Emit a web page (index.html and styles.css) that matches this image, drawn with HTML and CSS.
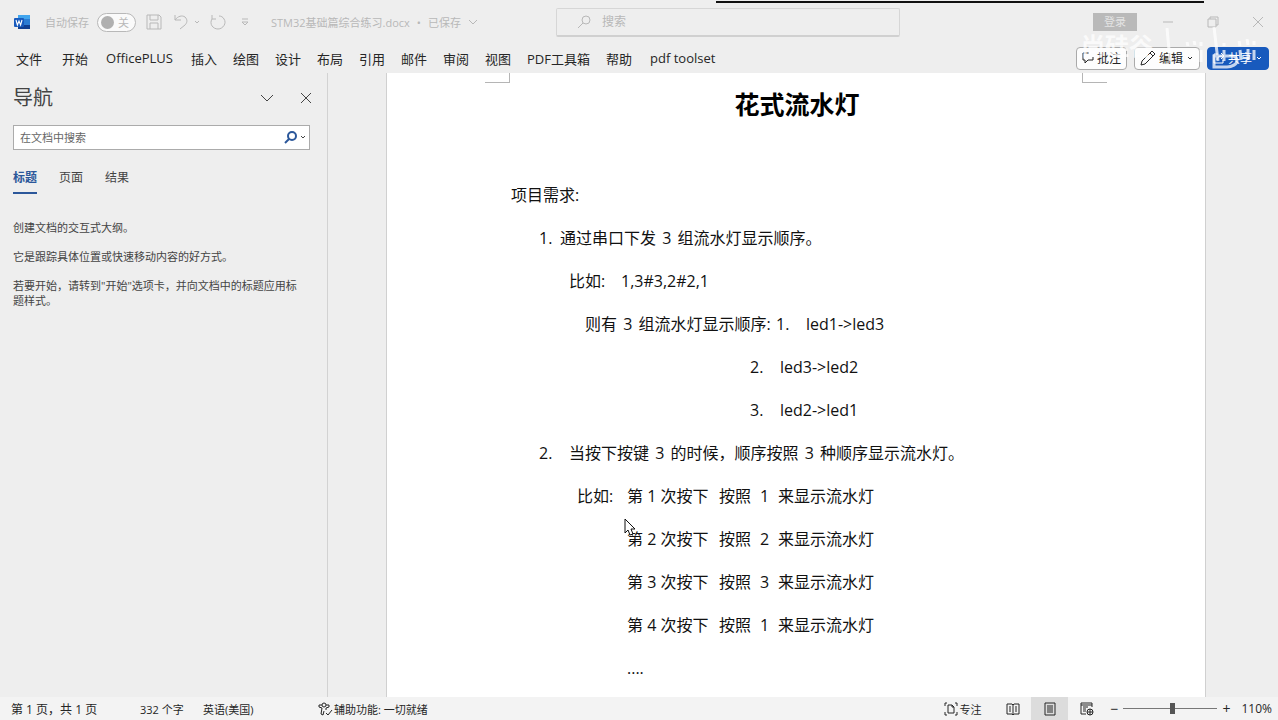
FILE: index.html
```html
<!DOCTYPE html>
<html lang="zh-CN">
<head>
    <meta charset="UTF-8">
    <meta name="viewport" content="width=device-width, initial-scale=1.0">
    <title>STM32基础篇综合练习.docx</title>
    <link rel="stylesheet" href="styles.css">
</head>
<body>
    <div class="top-line"></div>
    <header class="titlebar">
        <div class="quick">
            <svg class="logo" width="16" height="16" viewBox="0 0 16 16">
                <rect x="4" y="1" width="12" height="14" rx="1" fill="#2b7cd3"/>
                <rect x="4" y="1" width="12" height="4" fill="#41a5ee"/>
                <rect x="4" y="11" width="12" height="4" fill="#103f91"/>
                <rect x="0" y="4" width="10" height="9" rx="1" fill="#185abd"/>
                <path d="M2 6l1.400 5L5 7l1.600 4L8 6" fill="none" stroke="#fff" stroke-width="1.100"/>
            </svg>
            <label for="autosave">自动保存</label>
            <span class="switch"><input type="checkbox" id="autosave"><i></i><b>关</b></span>
            <button class="icon-btn" aria-label="保存">
                <svg width="16" height="16" viewBox="0 0 16 16"><path d="M1 1h12l2 2v12H1zM4 1v5h8V1M4 15V9h8v6"/></svg>
            </button>
            <button class="icon-btn undo" aria-label="撤消">
                <svg width="26" height="16" viewBox="0 0 26 16"><path d="M1 1v5h6M1 6C4 2 8 1 11 3c3 3 2 6 0 8l-5 4M21 7l2 2 2-2"/></svg>
            </button>
            <button class="icon-btn" aria-label="恢复">
                <svg width="16" height="16" viewBox="0 0 16 16"><path d="M2 1v4h4M2 5c-3 5 1 10 6 10s9-6 6-10c-1-2-3-3-5-3"/></svg>
            </button>
            <button class="icon-btn more" aria-label="自定义">
                <svg width="8" height="8" viewBox="0 0 8 8"><path d="M1 1h6M1 4l3 3 3-3z"/></svg>
            </button>
        </div>
        <div class="doc-name">
            <span>STM32基础篇综合练习.docx</span> <span>•</span> <span>已保存</span>
            <svg width="10" height="6" viewBox="0 0 10 6"><path d="M1 1l4 4 4-4"/></svg>
        </div>
        <div class="search">
            <svg width="14" height="14" viewBox="0 0 14 14"><circle cx="9" cy="5" r="4"/><path d="M6 8l-5 5"/></svg>
            <input type="text" placeholder="搜索" aria-label="搜索">
        </div>
        <div class="window">
            <button class="login">登录</button>
            <button class="icon-btn" aria-label="最小化"><svg width="12" height="12" viewBox="0 0 12 12"><path d="M1 6h10"/></svg></button>
            <button class="icon-btn" aria-label="还原"><svg width="12" height="12" viewBox="0 0 12 12"><path d="M1 3h8v8H1zM3 3V1h8v8H9"/></svg></button>
            <button class="icon-btn" aria-label="关闭"><svg width="12" height="12" viewBox="0 0 12 12"><path d="M1 1l10 10M11 1L1 11"/></svg></button>
        </div>
    </header>

    <nav class="ribbon">
        <a class="file" href="#">文件</a>
        <a class="home" href="#">开始</a>
        <a class="plus" href="#">OfficePLUS</a>
        <a href="#">插入</a>
        <a href="#">绘图</a>
        <a href="#">设计</a>
        <a href="#">布局</a>
        <a href="#">引用</a>
        <a href="#">邮件</a>
        <a href="#">审阅</a>
        <a href="#">视图</a>
        <a href="#">PDF工具箱</a>
        <a class="help" href="#">帮助</a>
        <a href="#">pdf toolset</a>
        <div class="actions">
            <button><svg width="12" height="12" viewBox="0 0 12 12"><path d="M7 1H1v7h2v3l3-3h5V5"/></svg>批注</button>
            <button><svg width="16" height="16" viewBox="0 0 16 16"><path d="M1 15l1-4L12 1l3 3L5 14zM10 3l3 3"/></svg>编辑<svg width="8" height="6" viewBox="0 0 8 6"><path d="M2 2l2 2 2-2"/></svg></button>
            <button class="share"><svg width="12" height="12" viewBox="0 0 12 12"><path d="M5 2H1v9h9V8M4 8c0-3 2-4 7-4M8 1l3 3-3 3"/></svg>共享<svg width="8" height="6" viewBox="0 0 8 6"><path d="M2 2l2 2 2-2"/></svg></button>
        </div>
    </nav>

    <!-- channel watermark over the window corner -->
    <div class="watermark">
        <span>尚硅谷</span>
        <svg width="98" height="46" viewBox="0 0 98 46">
            <path d="M7 5l3 33M27 19l1 4M26 27l1 12M34 18l1 4M34 27v12M41 19v4M41 27v12M54 4l4 34M64 20v3M64 27v11M79 18l1 5M80 27l1 10M87 16l1 6M88 26v11M94 18v4M94 27v10"/>
            <path d="M54 33h18c4 0 5 2 5 5s-5 6-10 6H54z"/>
        </svg>
    </div>

    <main>
        <aside class="outline">
            <div class="outline-head">
                <h2>导航</h2>
                <button class="icon-btn" aria-label="选项"><svg width="14" height="12" viewBox="0 0 14 12"><path d="M1 3l6 6 6-6"/></svg></button>
                <button class="icon-btn" aria-label="关闭"><svg width="12" height="12" viewBox="0 0 12 12"><path d="M1 1l10 10M11 1L1 11"/></svg></button>
            </div>
            <div class="find">
                <input type="text" placeholder="在文档中搜索" aria-label="在文档中搜索">
                <svg width="14" height="14" viewBox="0 0 14 14"><circle cx="8" cy="6" r="4"/><path d="M5 9l-4 4"/></svg>
                <svg class="thin" width="8" height="6" viewBox="0 0 8 6"><path d="M2 2l2 2 2-2"/></svg>
            </div>
            <div class="tabs">
                <button class="active">标题</button>
                <button>页面</button>
                <button>结果</button>
            </div>
            <p>创建文档的交互式大纲。</p>
            <p>它是跟踪具体位置或快速移动内容的好方式。</p>
            <p>若要开始，请转到"开始"选项卡，并向文档中的标题应用标题样式。</p>
        </aside>
        <div class="canvas">
            <article class="page">
                <i class="crop left"></i>
                <i class="crop right"></i>
                <h1>花式流水灯</h1>
                <p>项目需求:</p>
                <p class="in1"><span class="num">1.</span>通过串口下发 <b>3</b> 组流水灯显示顺序。</p>
                <p class="in2"><span class="eg">比如:</span>1,3#3,2#2,1</p>
                <p class="in3"><span class="lead">则有 <b>3</b> 组流水灯显示顺序:</span><span class="led">1.</span>led1-&gt;led3</p>
                <p class="in5"><span class="led">2.</span>led3-&gt;led2</p>
                <p class="in5"><span class="led">3.</span>led2-&gt;led1</p>
                <p class="in1"><span class="led">2.</span>当按下按键 <b>3</b> 的时候，顺序按照 <b>3</b> 种顺序显示流水灯。</p>
                <p class="press first"><span class="eg">比如:</span><span class="nth">第 1 次按下</span><span class="by">按照</span><span class="n">1</span>来显示流水灯</p>
                <p class="press"><span class="nth">第 2 次按下</span><span class="by">按照</span><span class="n">2</span>来显示流水灯</p>
                <p class="press"><span class="nth">第 3 次按下</span><span class="by">按照</span><span class="n">3</span>来显示流水灯</p>
                <p class="press"><span class="nth">第 4 次按下</span><span class="by">按照</span><span class="n">1</span>来显示流水灯</p>
                <p class="press">....</p>
                <svg class="cursor" width="12" height="18" viewBox="0 0 12 18"><path d="M1 1v14l3-3 2 5 3-1-2-5h4z"/></svg>
            </article>
        </div>
    </main>

    <footer class="status">
        <span class="pages">第 1 页，共 1 页</span>
        <span class="words">332 个字</span>
        <span class="lang">英语(美国)</span>
        <span class="access"><svg width="15" height="14" viewBox="0 0 15 14"><circle cx="6" cy="3" r="2"/><path d="M4 3L1 3v2l3 1-1 6 2 1 1-4M8 3l3 0v2L8 6v2M8 11l2 2 4-5"/></svg>辅助功能: 一切就绪</span>
        <div class="view">
            <button class="focus"><svg width="14" height="14" viewBox="0 0 14 14"><path d="M3 1H1v3M1 10v3h2M11 1h2v3M13 10v3h-2M4 3h4l2 2v6H4zM8 3v2h2"/></svg>专注</button>
            <button class="mode" aria-label="阅读视图"><svg width="14" height="14" viewBox="0 0 14 14"><path d="M1 2h5l1 1 1-1h5v10H8l-1 1-1-1H1zM7 3v10M3 5h2M3 7h2M3 9h2M9 5h2M9 7h2M9 9h2"/></svg></button>
            <button class="mode on" aria-label="页面视图"><svg width="14" height="14" viewBox="0 0 14 14"><path d="M2 1h10v12H2zM4 4h6M4 6h6M4 8h6M4 10h6"/></svg></button>
            <button class="mode" aria-label="Web 版式"><svg width="14" height="14" viewBox="0 0 14 14"><path d="M6 12H1V1h11v4M1 3h11M3 5h5M3 7h3M3 9h3"/><circle cx="10" cy="10" r="3"/><path d="M7 10h6M10 7v6"/></svg></button>
            <button class="zoom-btn">−</button>
            <input type="range" min="10" max="200" value="110" aria-label="缩放">
            <button class="zoom-btn">+</button>
            <span class="percent">110%</span>
        </div>
    </footer>
</body>
</html>
```
FILE: styles.css
```css
* {
    box-sizing: border-box;
}
body {
    margin: 0;
    height: 100vh;
    display: flex;
    flex-direction: column;
    overflow: hidden;
    background-color: #eee;
    color: #262626;
    font-family: "Open Sans", "Noto Sans CJK SC", sans-serif;
    font-size: 12px;
}
button, input {
    font: inherit;
    color: inherit;
    padding: 0;
    border: none;
    background: none;
}
svg {
    display: block;
    flex: none;
    fill: none;
    stroke: currentColor;
}
.logo {
    stroke: none;
}
a {
    color: inherit;
    text-decoration: none;
}
.top-line {
    position: absolute;
    top: 0;
    left: 56%;
    right: 74px;
    height: 3px;
    background-color: #111;
    border-top: 1px solid #eee;
}

/* title bar */
.titlebar {
    height: 45px;
    flex: none;
    display: flex;
    align-items: center;
    padding: 0 0 1px 14px;
    color: #b8b8b8;
    font-size: 11px;
}
.quick {
    display: flex;
    align-items: center;
    width: 257px;
}
.quick label {
    margin: 0 8px 0 15px;
}
.switch {
    position: relative;
    width: 39px;
    height: 19px;
    border: 1px solid #b8b8b8;
    border-radius: 10px;
    background-color: #fafafa;
}
.switch input {
    position: absolute;
    inset: 0;
    margin: 0;
    opacity: 0;
}
.switch i {
    position: absolute;
    left: 3px;
    top: 2px;
    width: 13px;
    height: 13px;
    border-radius: 50%;
    background-color: #b0b0b0;
}
.switch b {
    position: absolute;
    right: 6px;
    top: 0;
    line-height: 17px;
    font-weight: normal;
}
.icon-btn {
    display: flex;
}
.quick .icon-btn {
    margin-left: 10px;
}
.quick .undo {
    margin-left: 12px;
}
.quick .more {
    margin-left: 15px;
}
.doc-name {
    display: flex;
    align-items: center;
    gap: 7px;
    width: 285px;
    white-space: nowrap;
}
.search {
    display: flex;
    align-items: center;
    gap: 11px;
    width: 344px;
    height: 29px;
    padding-left: 20px;
    border: 1px solid #d6d6d6;
    border-bottom: 2px solid #d0d0d0;
    border-radius: 2px;
}
.search input {
    flex: 1;
    min-width: 0;
    font-size: 12px;
}
::placeholder {
    color: inherit;
    opacity: 1;
}
.window {
    margin-left: auto;
    display: flex;
    align-items: center;
    gap: 33px;
    padding-right: 14px;
}
.login {
    width: 44px;
    height: 18px;
    margin-right: -8px;
    background-color: #b9b9b9;
    color: #e4e4e4;
    line-height: 18px;
}

/* ribbon tabs */
.ribbon {
    flex: none;
    display: flex;
    align-items: center;
    gap: 16px;
    height: 28px;
    padding: 0 9px 2px 16px;
    font-size: 13px;
    white-space: nowrap;
}
.ribbon .file {
    margin-right: 4px;
}
.ribbon .home, .ribbon .plus, .ribbon .help {
    margin-right: 2px;
}
.actions {
    margin-left: auto;
    display: flex;
    gap: 7px;
}
.actions button {
    display: flex;
    align-items: center;
    justify-content: center;
    gap: 3px;
    height: 23px;
    padding: 0 5px;
    border: 1px solid #aaa;
    border-radius: 4px;
    background-color: #fdfdfd;
    font-size: 12px;
}
.actions .share {
    border-color: #185abd;
    background-color: #185abd;
    color: #fff;
}
.watermark {
    position: absolute;
    top: 16px;
    right: 20px;
    display: flex;
    align-items: center;
    gap: 7px;
    color: #fff;
    opacity: 0.75;
    font-size: 24px;
    font-weight: bold;
    line-height: 60px;
    pointer-events: none;
}
.watermark svg {
    stroke-width: 3;
}

/* navigation pane */
main {
    flex: 1;
    min-height: 0;
    display: flex;
}
.outline {
    width: 328px;
    flex: none;
    padding: 10px 17px 0 13px;
    border-right: 1px solid #d2d2d2;
    color: #444;
    font-size: 11px;
}
.outline-head {
    display: flex;
    align-items: center;
    gap: 26px;
    height: 30px;
    margin: 0 -2px 12px 0;
}
.outline h2 {
    flex: 1;
    margin: 0;
    font-size: 20px;
    font-weight: normal;
    line-height: 30px;
}
.find {
    display: flex;
    align-items: center;
    gap: 1px;
    height: 25px;
    padding: 0 2px 1px 6px;
    border: 1px solid #ababab;
    background-color: #fff;
}
.find input {
    flex: 1;
    min-width: 0;
    color: #666;
}
.find svg {
    color: #2b579a;
    stroke-width: 2;
}
.find .thin {
    color: #444;
    stroke-width: 1;
}
.tabs {
    display: flex;
    gap: 22px;
    margin: 15px 0 26px;
}
.tabs button {
    height: 29px;
    padding-bottom: 4px;
    border-bottom: 2px solid transparent;
    font-size: 12px;
}
.tabs .active {
    border-color: #2b579a;
    color: #2b579a;
    font-weight: bold;
}
.outline p {
    margin: 0 0 14px;
    padding-right: 8px;
    line-height: 15px;
}

/* document */
.canvas {
    flex: 1;
    min-width: 0;
    padding-right: 14px;
}
.page {
    position: relative;
    max-width: 820px;
    height: 100%;
    margin: 0 auto;
    padding: 10px 122px 0 124px;
    border: 1px solid #d0d0d0;
    border-top: none;
    border-bottom: none;
    background-color: #fff;
    color: #111;
    font-size: 16px;
    line-height: 43px;
}
.page h1 {
    margin: 0 0 48px;
    color: #000;
    font-size: 25px;
    line-height: 43px;
    text-align: center;
}
.page p {
    margin: 0;
    white-space: nowrap;
}
.page b {
    margin: 0 2px;
    font-weight: normal;
}
.page p span {
    display: inline-block;
}
.in1 {
    padding-left: 28px;
}
.in2 {
    padding-left: 58px;
}
.in3 {
    padding-left: 74px;
}
.in5 {
    padding-left: 239px;
}
.num {
    width: 21px;
}
.led {
    width: 30px;
}
.eg {
    width: 52px;
}
.lead {
    width: 191px;
}
.press {
    padding-left: 116px;
}
.first {
    padding-left: 66px;
}
.first .eg {
    width: 50px;
}
.nth {
    width: 92px;
}
.by {
    width: 41px;
}
.n {
    width: 18px;
}
.crop {
    position: absolute;
    top: 0;
    width: 25px;
    height: 10px;
    border-bottom: 1px solid #b5b5b5;
}
.crop.left {
    left: 98px;
    border-right: 1px solid #b5b5b5;
}
.crop.right {
    right: 98px;
    border-left: 1px solid #b5b5b5;
}
.cursor {
    position: absolute;
    left: 237px;
    top: 445px;
    fill: #fff;
}

/* status bar */
.status {
    flex: none;
    display: flex;
    align-items: center;
    height: 23px;
    padding: 0 6px 0 11px;
    background-color: #f3f3f3;
    font-size: 11px;
    white-space: nowrap;
}
.pages {
    width: 129px;
    font-size: 12px;
}
.words {
    width: 63px;
}
.lang {
    width: 115px;
}
.access, .focus {
    display: flex;
    align-items: center;
    gap: 1px;
}
.view {
    margin-left: auto;
    display: flex;
    align-items: center;
}
.focus {
    margin-right: 13px;
}
.mode {
    display: flex;
    align-items: center;
    justify-content: center;
    width: 37px;
    height: 23px;
}
.mode.on {
    background-color: #dcdcdc;
}
.zoom-btn {
    width: 18px;
    font-size: 14px;
    line-height: 20px;
}
.view input {
    appearance: none;
    width: 94px;
    height: 14px;
    margin: 0;
    background: linear-gradient(#777, #777) center / 100% 1px no-repeat;
}
.view input::-webkit-slider-thumb {
    appearance: none;
    width: 5px;
    height: 11px;
    background-color: #555;
}
.percent {
    margin-left: 6px;
    font-size: 12px;
}
```
